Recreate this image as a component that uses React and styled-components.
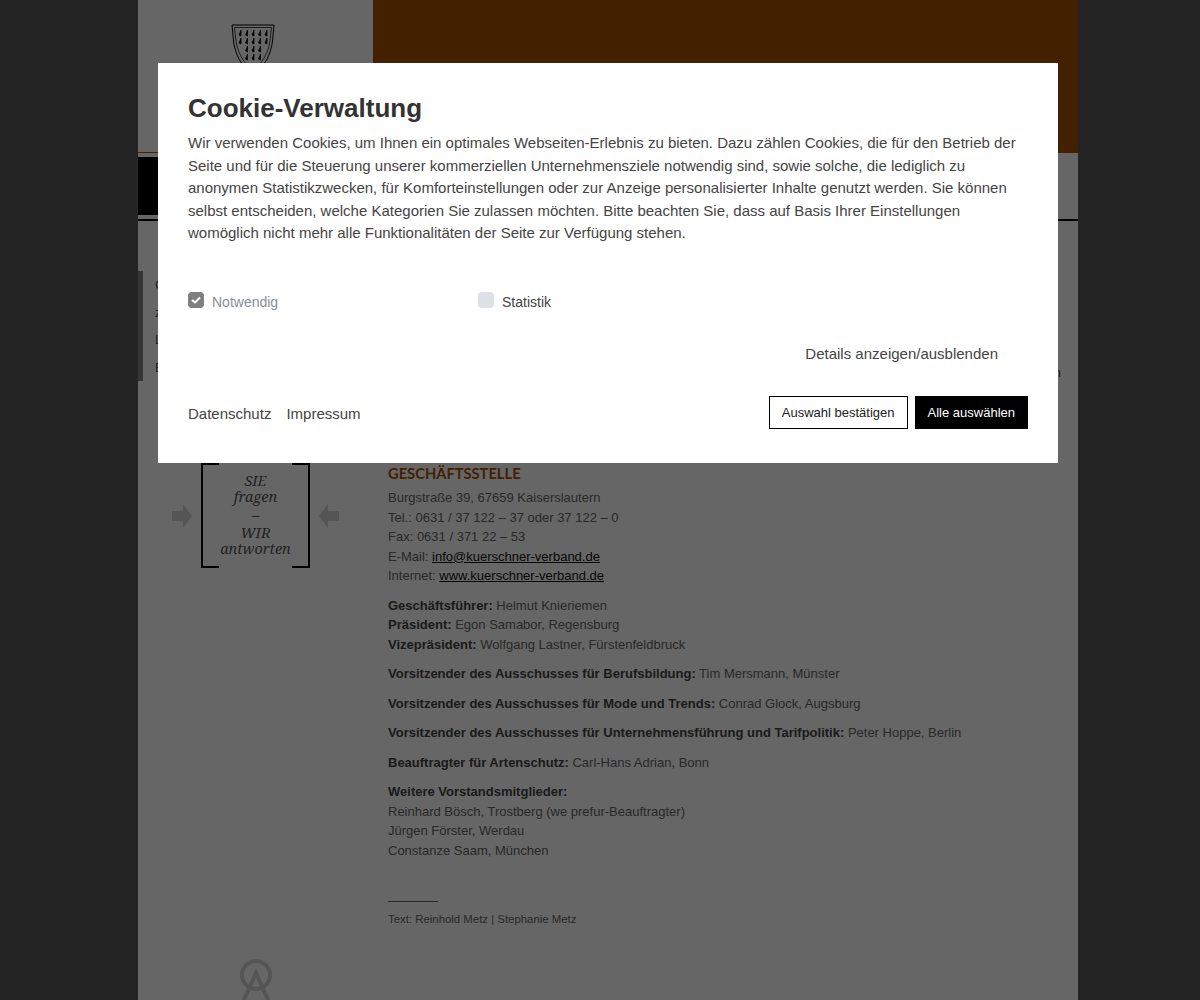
import React from "react";
import styled, { createGlobalStyle } from "styled-components";

const GlobalStyle = createGlobalStyle`
  html, body {
    margin: 0;
    padding: 0;
    background: #5a5a5a;
    font-family: "Liberation Sans", Arial, sans-serif;
  }
`;

const Page = styled.div`
  width: 940px;
  height: 1000px;
  margin: 0 0 0 138px;
  background: #fff;
  overflow: hidden;
`;

const Header = styled.header`
  display: flex;
  height: 152px;
  border-bottom: 1px solid #a85000;
`;

const LogoBox = styled.div`
  width: 235px;
  display: flex;
  justify-content: center;
  padding: 24px 5px 0 0;
  box-sizing: border-box;
`;

const Banner = styled.div`
  flex: 1;
  background: #a85000;
`;

const NavBand = styled.nav`
  height: 68px;
  padding-top: 4px;
  box-sizing: border-box;
  border-bottom: 2px solid #000;
`;

const NavBlack = styled.div`
  width: 235px;
  height: 58px;
  background: #000;
`;

const Intro = styled.section`
  position: relative;
  height: 208px;
  background: #fff;
  padding-top: 50px;
  box-sizing: border-box;
`;

const Quote = styled.div`
  width: 200px;
  height: 110px;
  border-left: 5px solid #888;
  padding-left: 12px;
  box-sizing: border-box;
  font-size: 13px;
  line-height: 27.5px;
  color: #555;
`;

const IntroEnd = styled.div`
  position: absolute;
  right: 17px;
  top: 144px;
  font-size: 13px;
  color: #555;
`;

const Main = styled.main`
  display: flex;
  padding-top: 34px;
`;

const Aside = styled.aside`
  width: 250px;
  flex: none;
`;

const AskBox = styled.div`
  display: flex;
  align-items: center;
  justify-content: center;
  gap: 9px;
  margin-left: 34px;
  width: 167px;
`;

const Arrow = styled.svg`
  flex: none;
`;

const Bracket = styled.div`
  position: relative;
  width: 109px;
  height: 105px;
  flex: none;
  box-sizing: border-box;
  border-left: 2px solid #000;
  border-right: 2px solid #000;
  text-align: center;
  font-family: "Noto Serif", "DejaVu Serif", serif;
  font-style: italic;
  font-size: 14.5px;
  color: #555;
  padding-top: 9px;

  &::before, &::after {
    content: "";
    position: absolute;
    top: 0;
    bottom: 0;
    width: 16px;
    border-top: 2px solid #000;
    border-bottom: 2px solid #000;
  }
  &::before { left: 0; }
  &::after { right: 0; }
`;

const BracketLine = styled.div`
  height: ${(p) => (p.$tall ? "20px" : "16px")};
  line-height: ${(p) => (p.$tall ? "20px" : "16px")};
`;

const Content = styled.div`
  flex: 1;
  font-size: 13px;
  line-height: 19.5px;
  color: #666;
`;

const SectionTitle = styled.h2`
  margin: 0 0 5px;
  font-family: Lato, "Liberation Sans", sans-serif;
  font-size: 14.7px;
  font-weight: 700;
  line-height: 20px;
  color: #a85000;
`;

const Para = styled.p`
  margin: 0 0 10px;
  b { color: #444; }
  a { color: #111; text-decoration: underline; }
`;

const Rule = styled.div`
  width: 50px;
  height: 1px;
  background: #666;
  margin-top: 41px;
`;

const Credit = styled.p`
  margin: 9px 0 0;
  font-size: 11.4px;
  line-height: 16px;
`;

const BottomMark = styled.div`
  margin-top: 31px;
`;

const Overlay = styled.div`
  position: fixed;
  inset: 0;
  background: rgba(0, 0, 0, 0.6);
`;

const Modal = styled.div`
  position: fixed;
  left: 158px;
  top: 63px;
  width: 900px;
  height: 400px;
  box-sizing: border-box;
  background: #fff;
  padding: 30px;
  color: #444;
`;

const Title = styled.h1`
  margin: 0 0 8px;
  font-size: 26px;
  line-height: 31px;
  font-weight: 700;
  color: #333;
`;

const Lead = styled.p`
  margin: 0;
  font-size: 15px;
  line-height: 22.5px;
`;

const Options = styled.div`
  display: flex;
  margin-top: 47px;
`;

const Option = styled.label`
  width: 290px;
  display: flex;
  align-items: center;
  gap: 8px;
  font-size: 14px;
  line-height: 21px;
  color: ${(p) => (p.$disabled ? "#868e96" : "#444")};
`;

const Check = styled.span`
  width: 16px;
  height: 16px;
  border-radius: 4px;
  display: flex;
  align-items: center;
  justify-content: center;
  background: ${(p) => (p.$checked ? "#7f7f7f" : "#dee2e6")};
  margin-top: -4px;
`;

const DetailsRow = styled.div`
  display: flex;
  justify-content: flex-end;
  margin-top: 30px;
  padding-right: 30px;
  font-size: 15px;
  line-height: 22px;
`;

const Footer = styled.div`
  display: flex;
  justify-content: space-between;
  align-items: center;
  margin-top: 31px;
`;

const Links = styled.div`
  display: flex;
  gap: 15px;
  padding-top: 2px;
  font-size: 15px;
`;

const Buttons = styled.div`
  display: flex;
  gap: 7px;
`;

const Button = styled.button`
  height: 33px;
  padding: 0 12px;
  border: 1px solid #000;
  border-radius: 0;
  background: ${(p) => (p.$primary ? "#000" : "#fff")};
  color: ${(p) => (p.$primary ? "#fff" : "#222")};
  font-family: inherit;
  font-size: 13px;
`;

const Shield = () => (
  <svg width="44" height="60" viewBox="0 0 44 60">
    <path d="M1 1H43L41.500 17C40 30 34 42 22 52C10 42 4 30 2.500 17Z" fill="#fff" stroke="#000" strokeWidth="1" />
    <path d="M3.500 3.500H40.500L39 17C37.500 28 32 38 22 48C12 38 6.500 28 5 17Z" fill="none" stroke="#000" strokeWidth="0.700" />
    {[8, 14.500, 21, 27.500, 34].map((x) =>
      [6, 14, 22, 30].map((y) =>
        y > 20 && (x < 14 || x > 30) ? null : (
          <path key={`${x}-${y}`} d={`M${x + 2} ${y}L${x} ${y + 5}L${x + 2} ${y + 6}Z`} fill="#000" stroke="#000" strokeWidth="0.700" />
        )
      )
    )}
  </svg>
);

const App = () => (
  <>
    <GlobalStyle />
    <Page>
      <Header>
        <LogoBox>
          <Shield />
        </LogoBox>
        <Banner />
      </Header>
      <NavBand>
        <NavBlack />
      </NavBand>
      <Intro>
        <Quote>
          C<br />z<br />L<br />E
        </Quote>
        <IntroEnd>n</IntroEnd>
      </Intro>
      <Main>
        <Aside>
          <AskBox>
            <Arrow width="20" height="24" viewBox="0 0 20 24">
              <path d="M0 7H11V0L20 12L11 24V17H0Z" fill="#d4d4d4" />
            </Arrow>
            <Bracket>
              <BracketLine>SIE</BracketLine>
              <BracketLine>fragen</BracketLine>
              <BracketLine $tall>–</BracketLine>
              <BracketLine>WIR</BracketLine>
              <BracketLine>antworten</BracketLine>
            </Bracket>
            <Arrow width="20" height="24" viewBox="0 0 20 24">
              <path d="M20 7H9V0L0 12L9 24V17H20Z" fill="#d4d4d4" />
            </Arrow>
          </AskBox>
        </Aside>
        <Content>
          <SectionTitle>GESCHÄFTSSTELLE</SectionTitle>
          <Para>
            Burgstraße 39, 67659 Kaiserslautern<br />
            Tel.: 0631 / 37 122 – 37 oder 37 122 – 0<br />
            Fax: 0631 / 371 22 – 53<br />
            E-Mail: <a href="#mail">info@kuerschner-verband.de</a><br />
            Internet: <a href="#web">www.kuerschner-verband.de</a>
          </Para>
          <Para>
            <b>Geschäftsführer:</b> Helmut Knieriemen<br />
            <b>Präsident:</b> Egon Samabor, Regensburg<br />
            <b>Vizepräsident:</b> Wolfgang Lastner, Fürstenfeldbruck
          </Para>
          <Para><b>Vorsitzender des Ausschusses für Berufsbildung:</b> Tim Mersmann, Münster</Para>
          <Para><b>Vorsitzender des Ausschusses für Mode und Trends:</b> Conrad Glock, Augsburg</Para>
          <Para><b>Vorsitzender des Ausschusses für Unternehmensführung und Tarifpolitik:</b> Peter Hoppe, Berlin</Para>
          <Para><b>Beauftragter für Artenschutz:</b> Carl-Hans Adrian, Bonn</Para>
          <Para>
            <b>Weitere Vorstandsmitglieder:</b><br />
            Reinhard Bösch, Trostberg (we prefur-Beauftragter)<br />
            Jürgen Förster, Werdau<br />
            Constanze Saam, München
          </Para>
          <Rule />
          <Credit>Text: Reinhold Metz | Stephanie Metz</Credit>
        </Content>
      </Main>
      <BottomMark>
        <svg width="940" height="44" viewBox="0 0 940 44">
          <circle cx="118" cy="17" r="14" fill="none" stroke="#d4d4d4" strokeWidth="4" />
          <path d="M105 44L118 15L131 44" fill="none" stroke="#d4d4d4" strokeWidth="4" />
        </svg>
      </BottomMark>
    </Page>
    <Overlay />
    <Modal>
      <Title>Cookie-Verwaltung</Title>
      <Lead>
        Wir verwenden Cookies, um Ihnen ein optimales Webseiten-Erlebnis zu bieten. Dazu zählen Cookies, die für den Betrieb der Seite und für die Steuerung unserer kommerziellen Unternehmensziele notwendig sind, sowie solche, die lediglich zu anonymen Statistikzwecken, für Komforteinstellungen oder zur Anzeige personalisierter Inhalte genutzt werden. Sie können selbst entscheiden, welche Kategorien Sie zulassen möchten. Bitte beachten Sie, dass auf Basis Ihrer Einstellungen womöglich nicht mehr alle Funktionalitäten der Seite zur Verfügung stehen.
      </Lead>
      <Options>
        <Option $disabled>
          <Check $checked>
            <svg width="10" height="8" viewBox="0 0 10 8">
              <path d="M1 4L4 6.500L9 1.500" fill="none" stroke="#fff" strokeWidth="2" />
            </svg>
          </Check>
          Notwendig
        </Option>
        <Option>
          <Check />
          Statistik
        </Option>
      </Options>
      <DetailsRow>Details anzeigen/ausblenden</DetailsRow>
      <Footer>
        <Links>
          <span>Datenschutz</span>
          <span>Impressum</span>
        </Links>
        <Buttons>
          <Button>Auswahl bestätigen</Button>
          <Button $primary>Alle auswählen</Button>
        </Buttons>
      </Footer>
    </Modal>
  </>
);

export default App;
